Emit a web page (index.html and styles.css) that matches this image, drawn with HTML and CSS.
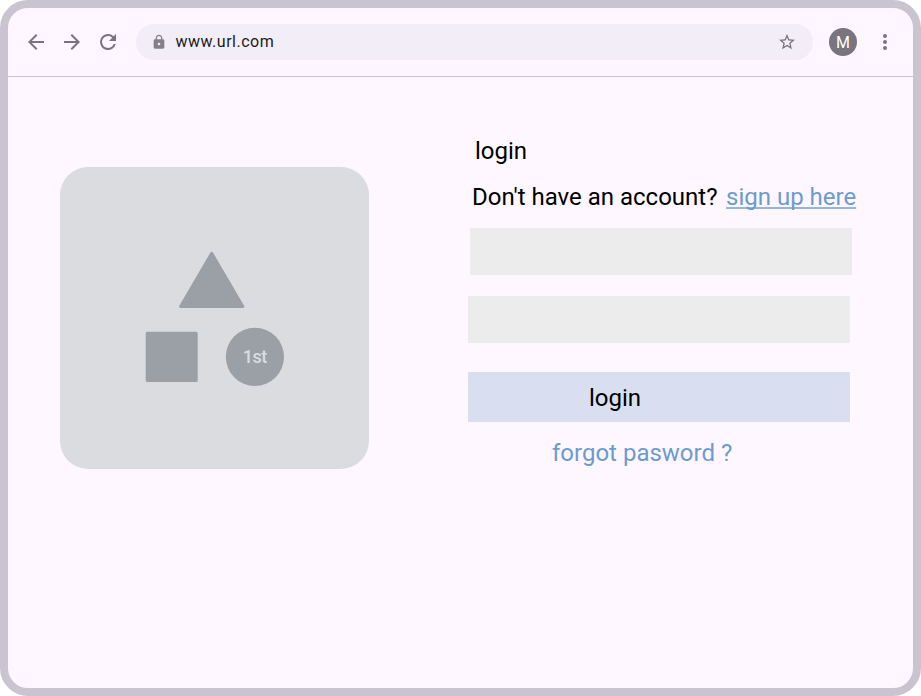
FILE: index.html
```html
<!DOCTYPE html>
<html lang="en">
<head>
<meta charset="utf-8">
<title>Login</title>
<link rel="stylesheet" href="styles.css">
</head>
<body>
<div class="window">
  <header class="toolbar">
    <svg class="icon" viewBox="0 0 24 24"><path d="M20 11H7.83l5.59-5.59L12 4l-8 8 8 8 1.41-1.41L7.83 13H20v-2z"/></svg>
    <svg class="icon" viewBox="0 0 24 24"><path d="M12 4l-1.41 1.41L16.17 11H4v2h12.17l-5.58 5.59L12 20l8-8z"/></svg>
    <svg class="icon" viewBox="0 0 24 24"><path d="M17.65 6.35A7.96 7.96 0 0 0 12 4a8 8 0 1 0 7.73 10h-2.08A6 6 0 1 1 12 6c1.66 0 3.14.69 4.22 1.78L13 11h7V4l-2.350 2.350z"/></svg>
    <div class="address">
      <svg class="lock" viewBox="0 0 24 24"><path d="M18 8h-1V6c0-2.760-2.240-5-5-5S7 3.240 7 6v2H6c-1.100 0-2 .9-2 2v10c0 1.100.9 2 2 2h12c1.100 0 2-.9 2-2V10c0-1.100-.9-2-2-2zm-6 9c-1.100 0-2-.9-2-2s.9-2 2-2 2 .9 2 2-.9 2-2 2zm3.100-9H8.900V6c0-1.710 1.390-3.100 3.100-3.100s3.100 1.390 3.100 3.100v2z"/></svg>
      <span class="url">www.url.com</span>
      <svg class="star" viewBox="0 0 24 24"><path d="M22 9.240l-7.190-.62L12 2 9.190 8.630 2 9.240l5.460 4.730L5.820 21 12 17.270 18.180 21l-1.630-7.030L22 9.240zM12 15.400l-3.760 2.270 1-4.280-3.320-2.880 4.380-.38L12 6.100l1.710 4.040 4.380.38-3.320 2.880 1 4.280L12 15.400z"/></svg>
    </div>
    <div class="avatar">M</div>
    <svg class="icon menu" viewBox="0 0 24 24"><circle cx="12" cy="6" r="2"/><circle cx="12" cy="12" r="2"/><circle cx="12" cy="18" r="2"/></svg>
  </header>
  <main class="content">
    <div class="picture">
      <svg class="shapes" viewBox="0 0 142 138">
        <path class="shape" d="M67.700 4.300 L98.800 57.500 H36.600 Z"/>
        <rect class="shape" x="3.200" y="84.300" width="49" height="47.200"/>
        <circle cx="110.900" cy="107.800" r="29.100"/>
        <text class="rank" x="110.700" y="114.300">1st</text>
      </svg>
    </div>
    <form class="form">
      <h1 class="title">login</h1>
      <p class="signup">Don't have an account? <a class="link" href="#">sign up here</a></p>
      <input class="field first" type="text" aria-label="Username">
      <input class="field" type="password" aria-label="Password">
      <button class="submit" type="button">login</button>
      <a class="forgot" href="#">forgot pasword ?</a>
    </form>
  </main>
</div>
</body>
</html>
```
FILE: styles.css
```css
* {
  box-sizing: border-box;
}

body {
  margin: 0;
  background: #fff;
  font-family: Roboto, sans-serif;
}

.window {
  width: 921px;
  height: 696px;
  border: 8px solid #cac4d0;
  border-radius: 28px;
  background: #fef7ff;
  overflow: hidden;
}

.toolbar {
  display: flex;
  align-items: center;
  gap: 12px;
  height: 69px;
  padding: 0 16px;
  border-bottom: 1px solid #cac4d0;
}

.icon {
  flex: none;
  width: 24px;
  height: 24px;
  fill: #79747e;
}

.address {
  display: flex;
  align-items: center;
  width: 677px;
  height: 36px;
  margin: 0 4px;
  padding: 0 16px 0 15px;
  border-radius: 18px;
  background: #f3edf7;
}

.lock {
  width: 16px;
  height: 16px;
  fill: #857f8a;
}

.url {
  flex: 1;
  margin-left: 8.5px;
  color: #1d1b20;
  font-size: 16px;
  line-height: 24px;
  letter-spacing: 0.5px;
}

.star {
  width: 20px;
  height: 20px;
  padding: 0.5px;
  fill: #79747e;
}

.avatar {
  flex: none;
  width: 28px;
  height: 28px;
  padding-top: 1px;
  border-radius: 50%;
  background: #79747e;
  color: #fff;
  font-size: 16px;
  line-height: 28px;
  text-align: center;
}

.menu {
  margin-left: 4px;
}

.content {
  display: flex;
  align-items: flex-start;
  padding-left: 52px;
}

.picture {
  width: 309px;
  height: 302px;
  margin-top: 90px;
  padding: 82px 0 0 84px;
  border-radius: 28px;
  background: #dadce0;
}

.shapes {
  display: block;
  width: 142px;
  height: 138px;
  fill: #9aa0a6;
}

.shape {
  stroke: #9aa0a6;
  stroke-width: 3px;
  stroke-linejoin: round;
}

.rank {
  fill: #dadce0;
  font-size: 18px;
  font-weight: 500;
  letter-spacing: -0.6px;
  text-anchor: middle;
}

.form {
  display: flex;
  flex-direction: column;
  align-items: flex-start;
  width: 400px;
  margin-left: 99px;
  padding-top: 60px;
  font-size: 24px;
  line-height: 28px;
}

.title {
  margin: 0 0 18px 7px;
  color: #000;
  font-size: 24px;
  font-weight: 400;
}

.signup {
  display: flex;
  gap: 8.5px;
  margin: 0 0 17px 4px;
  color: #000;
  white-space: nowrap;
}

.link,
.forgot {
  color: #6c9bcf;
}

.link {
  text-decoration: underline 2px #94b6dd;
  text-decoration-skip-ink: none;
  text-underline-offset: 2px;
}

.field {
  width: 382px;
  height: 47px;
  margin-bottom: 29px;
  padding: 0 12px;
  border: 0;
  background: #ececec;
  font: inherit;
}

.first {
  margin: 0 0 21px 2px;
}

.submit {
  width: 382px;
  height: 50px;
  margin-bottom: 17px;
  padding: 1px 0 0 121px;
  border: 0;
  background: #d9dff0;
  color: #000;
  font: inherit;
  text-align: left;
}

.forgot {
  margin-left: 84px;
  text-decoration: none;
}
```
